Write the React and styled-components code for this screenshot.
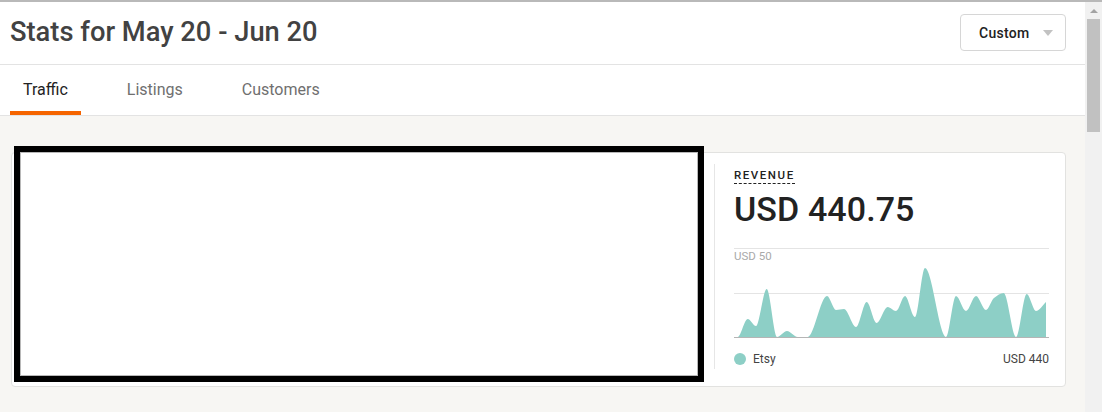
import React from "react";
import styled, { createGlobalStyle } from "styled-components";

const Global = createGlobalStyle`
  html, body { margin: 0; padding: 0; overflow: hidden; }
  body { font-family: Roboto, "Liberation Sans", Arial, sans-serif; background: #fff; }
  * { box-sizing: border-box; }
`;

const Window = styled.div`
  width: 1102px;
  height: 412px;
  display: flex;
  border-top: 2px solid #b9b9b9;
  overflow: hidden;
`;

const Main = styled.div`
  flex: 1;
  display: flex;
  flex-direction: column;
  min-width: 0;
`;

const Header = styled.header`
  height: 63px;
  display: flex;
  align-items: center;
  justify-content: space-between;
  padding: 0 19px 2px 10px;
  border-bottom: 1px solid #e3e3e3;
`;

const Title = styled.h1`
  margin: 0;
  font-size: 27.3px;
  font-weight: 500;
  color: #424242;
  letter-spacing: 0;
`;

const SelectButton = styled.button`
  width: 106px;
  height: 37px;
  margin-top: 1px;
  display: flex;
  align-items: center;
  padding: 0 0 0 18px;
  background: #fff;
  border: 1px solid #d6d6d6;
  border-radius: 4px;
  font-family: inherit;
  font-size: 14px;
  font-weight: 500;
  letter-spacing: 0.3px;
  color: #222;
`;

const Caret = styled.span`
  margin-left: 13px;
  width: 0;
  height: 0;
  border-left: 5px solid transparent;
  border-right: 5px solid transparent;
  border-top: 6px solid #c2c2c2;
`;

const Tabs = styled.nav`
  height: 51px;
  display: flex;
  gap: 33px;
  padding-left: 10px;
  border-bottom: 1px solid #e3e3e3;
`;

const Tab = styled.div`
  display: flex;
  align-items: center;
  padding: 2px 13px 0;
  font-size: 16px;
  color: ${(p) => (p.$active ? "#222" : "#6f6f6f")};
  border-bottom: 4px solid ${(p) => (p.$active ? "#f56400" : "transparent")};
`;

const Body = styled.section`
  flex: 1;
  background: #f7f6f3;
  padding: 36px 19px 0 11px;
`;

const Card = styled.div`
  display: flex;
  background: #fff;
  border: 1px solid #e2e2e0;
  border-radius: 4px;
`;

const Redacted = styled.div`
  flex: none;
  width: 690px;
  height: 236px;
  margin: -7px 0 0 2px;
  border: 6px solid #000;
  background: #fff;
  box-shadow: inset 0 0 0 1px #b8b8b8;
`;

const Panel = styled.div`
  flex: 1;
  margin: 11px 17px 17px 10px;
  padding: 0 0 3px 19px;
  border-left: 1px solid #e6e6e6;
  display: flex;
  flex-direction: column;
`;

const Label = styled.div`
  align-self: flex-start;
  margin-top: 4px;
  font-size: 11.5px;
  font-weight: 500;
  letter-spacing: 1.55px;
  color: #222;
  line-height: 15px;
  border-bottom: 1px dashed #222;
`;

const Amount = styled.div`
  margin-top: 6px;
  font-size: 34px;
  font-weight: 500;
  color: #222;
  line-height: 38px;
  letter-spacing: 0.1px;
`;

const ChartWrap = styled.div`
  position: relative;
  margin-top: 20px;
  height: 90px;
`;

const AxisLabel = styled.span`
  position: absolute;
  left: 0;
  top: 1px;
  font-size: 11.5px;
  color: #a9a9a9;
  line-height: 14px;
`;

const Legend = styled.div`
  margin-top: 14px;
  display: flex;
  align-items: center;
  font-size: 12px;
  color: #444;
`;

const Dot = styled.span`
  width: 12px;
  height: 12px;
  border-radius: 50%;
  background: #8dcfc6;
  margin-right: 7px;
`;

const LegendValue = styled.span`
  margin-left: auto;
  color: #444;
`;

const Scrollbar = styled.div`
  width: 17px;
  flex: none;
  background: #f1f1f1;
  display: flex;
  flex-direction: column;
  align-items: center;
`;

const Arrow = styled.span`
  margin-top: 7px;
  width: 0;
  height: 0;
  border-left: 4px solid transparent;
  border-right: 4px solid transparent;
  border-bottom: 4px solid #a3a3a3;
`;

const Thumb = styled.div`
  margin-top: 6px;
  width: 13px;
  height: 113px;
  background: #c1c1c1;
`;

const pts = [
  [0, 89], [3.7, 89], [13.7, 71], [22, 78], [32.7, 41], [43, 89], [53, 83], [63.7, 89],
  [73.7, 89], [93, 48], [102, 62], [110, 61], [122, 79], [132.7, 54], [142.7, 75],
  [153.7, 59], [162, 63], [171, 48], [181, 69], [191, 20], [212, 89], [222, 48],
  [232, 63], [242, 48], [252, 62], [260, 50], [269.7, 45], [282, 89], [292.7, 46],
  [302, 63], [312, 54],
];

function monotonePath(p) {
  const n = p.length;
  const dx = [], m = [], t = new Array(n);
  for (let i = 0; i < n - 1; i++) {
    dx[i] = p[i + 1][0] - p[i][0];
    m[i] = (p[i + 1][1] - p[i][1]) / dx[i];
  }
  t[0] = m[0];
  t[n - 1] = m[n - 2];
  for (let i = 1; i < n - 1; i++) {
    if (m[i - 1] * m[i] <= 0) t[i] = 0;
    else {
      const h0 = dx[i - 1], h1 = dx[i];
      t[i] = (3 * (h0 + h1)) / ((2 * h1 + h0) / m[i - 1] + (h1 + 2 * h0) / m[i]);
    }
  }
  let d = `M${p[0][0]},${p[0][1]}`;
  for (let i = 0; i < n - 1; i++) {
    const h = dx[i] / 3;
    d += ` C${p[i][0] + h},${p[i][1] + t[i] * h} ${p[i + 1][0] - h},${p[i + 1][1] - t[i + 1] * h} ${p[i + 1][0]},${p[i + 1][1]}`;
  }
  return d;
}

function Chart() {
  const line = monotonePath(pts);
  const area = `${line} L312,89 L0,89 Z`;
  return (
    <svg width="315" height="90" viewBox="0 0 315 90" style={{ display: "block" }}>
      <line x1="0" y1="0.5" x2="315" y2="0.5" stroke="#e4e4e4" />
      <line x1="0" y1="45.5" x2="315" y2="45.5" stroke="#e4e4e4" />
      <path d={area} fill="#8dcfc6" />
      <line x1="0" y1="89.5" x2="315" y2="89.5" stroke="#b5b5b5" />
    </svg>
  );
}

export default function App() {
  return (
    <>
      <Global />
      <Window>
        <Main>
          <Header>
            <Title>Stats for May 20 - Jun 20</Title>
            <SelectButton>
              Custom
              <Caret />
            </SelectButton>
          </Header>
          <Tabs>
            <Tab $active>Traffic</Tab>
            <Tab>Listings</Tab>
            <Tab>Customers</Tab>
          </Tabs>
          <Body>
            <Card>
              <Redacted />
              <Panel>
                <Label>REVENUE</Label>
                <Amount>USD 440.75</Amount>
                <ChartWrap>
                  <Chart />
                  <AxisLabel>USD 50</AxisLabel>
                </ChartWrap>
                <Legend>
                  <Dot />
                  Etsy
                  <LegendValue>USD 440</LegendValue>
                </Legend>
              </Panel>
            </Card>
          </Body>
        </Main>
        <Scrollbar>
          <Arrow />
          <Thumb />
        </Scrollbar>
      </Window>
    </>
  );
}
